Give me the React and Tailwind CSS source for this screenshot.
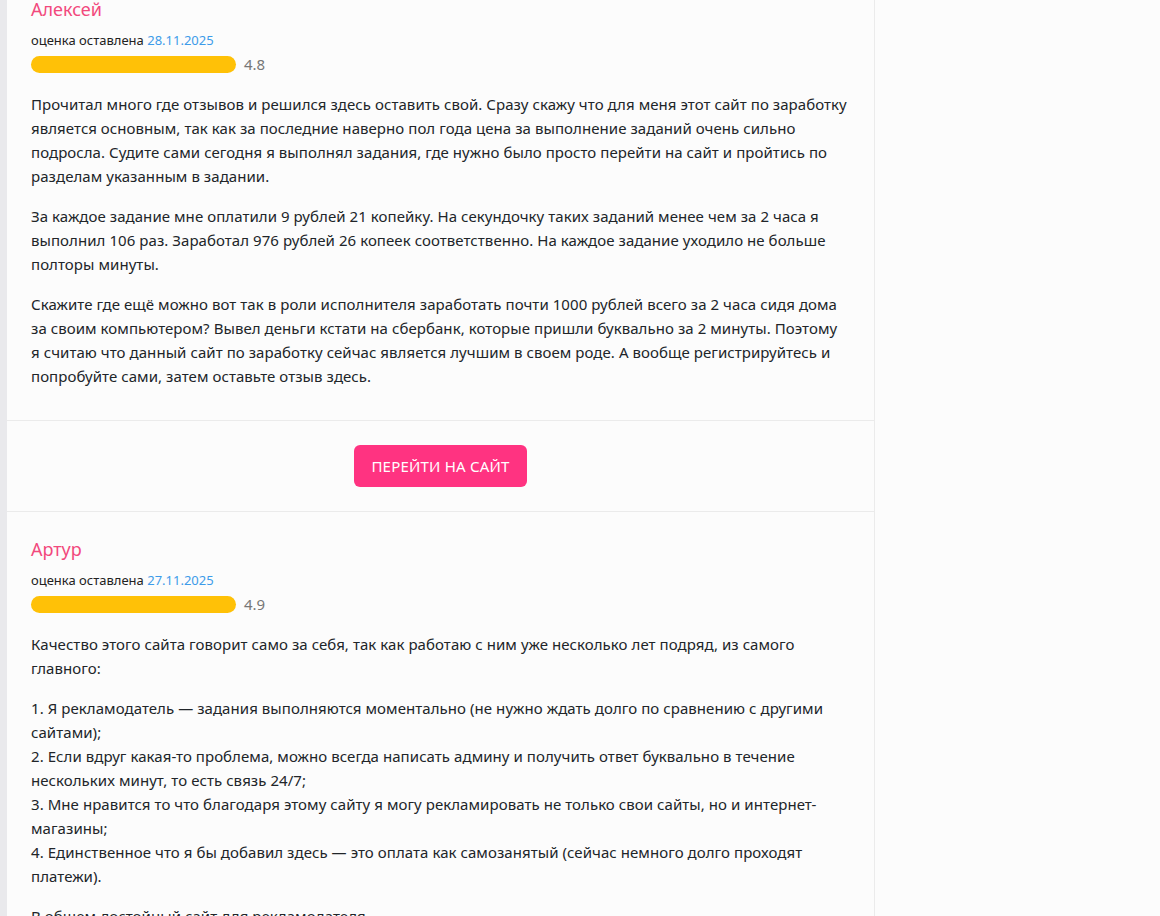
const REVIEWS = [
  {
    name: "Алексей",
    date: "28.11.2025",
    rating: "4.8",
    paragraphs: [
      ["Прочитал много где отзывов и решился здесь оставить свой. Сразу скажу что для меня этот сайт по заработку является основным, так как за последние наверно пол года цена за выполнение заданий очень сильно подросла. Судите сами сегодня я выполнял задания, где нужно было просто перейти на сайт и пройтись по разделам указанным в задании."],
      ["За каждое задание мне оплатили 9 рублей 21 копейку. На секундочку таких заданий менее чем за 2 часа я выполнил 106 раз. Заработал 976 рублей 26 копеек соответственно. На каждое задание уходило не больше полторы минуты."],
      ["Скажите где ещё можно вот так в роли исполнителя заработать почти 1000 рублей всего за 2 часа сидя дома за своим компьютером? Вывел деньги кстати на сбербанк, которые пришли буквально за 2 минуты. Поэтому я считаю что данный сайт по заработку сейчас является лучшим в своем роде. А вообще регистрируйтесь и попробуйте сами, затем оставьте отзыв здесь."],
    ],
  },
  {
    name: "Артур",
    date: "27.11.2025",
    rating: "4.9",
    paragraphs: [
      ["Качество этого сайта говорит само за себя, так как работаю с ним уже несколько лет подряд, из самого главного:"],
      [
        "1. Я рекламодатель — задания выполняются моментально (не нужно ждать долго по сравнению с другими сайтами);",
        "2. Если вдруг какая-то проблема, можно всегда написать админу и получить ответ буквально в течение нескольких минут, то есть связь 24/7;",
        "3. Мне нравится то что благодаря этому сайту я могу рекламировать не только свои сайты, но и интернет-магазины;",
        "4. Единственное что я бы добавил здесь — это оплата как самозанятый (сейчас немного долго проходят платежи).",
      ],
      ["В общем достойный сайт для рекламодателя."],
    ],
  },
];

function Review({ review, className }) {
  return (
    <div className={className}>
      <div className="text-[18px] leading-[28px] text-[#f2497d]">{review.name}</div>
      <div className="mt-2 text-[13px] leading-[18px] text-[#222]">
        оценка оставлена <span className="text-[#3d9be9]">{review.date}</span>
      </div>
      <div className="mt-1 flex items-center h-[22px]">
        <div className="w-[205px] h-[17px] rounded-full bg-[#ffc107]" />
        <span className="ml-2 text-[15px] text-[#777]">{review.rating}</span>
      </div>
      <div className="mt-[17px] text-[15px] leading-6 tracking-[0.06px] text-[#212529]">
        {review.paragraphs.map((p, i) => (
          <p key={i} className="mb-4">
            {p.map((line, j) => (
              <span key={j}>
                {line}
                {j < p.length - 1 && <br />}
              </span>
            ))}
          </p>
        ))}
      </div>
    </div>
  );
}

export default function App() {
  return (
    <div
      className="min-h-screen h-[916px] overflow-hidden flex bg-[#fcfcfc]"
      style={{ fontFamily: '"Noto Sans", "Open Sans", sans-serif' }}
    >
      <div className="w-[7px] shrink-0 bg-[#e9e9ec]" />
      <div className="w-[868px] shrink-0 border-r border-[#ebebeb] -mt-[29px]">
        <Review review={REVIEWS[0]} className="pl-6 pr-[26px] pt-6 pb-4" />
        <div className="border-y border-[#ebebeb] py-6 flex justify-center">
          <button className="h-[42px] px-[17px] rounded-md bg-[#ff3381] text-white text-[15px] tracking-[0.2px] uppercase">
            Перейти на сайт
          </button>
        </div>
        <Review review={REVIEWS[1]} className="pl-6 pr-[26px] pt-[23px] pb-4" />
      </div>
      <div className="flex-1" />
    </div>
  );
}
